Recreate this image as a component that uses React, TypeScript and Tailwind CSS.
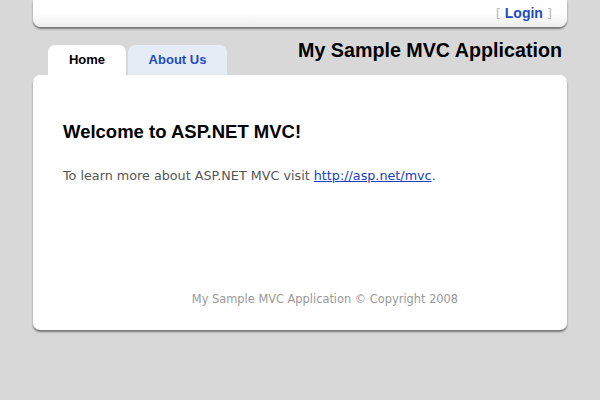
export default function App() {
  return (
    <div className="min-h-[400px] w-[600px] bg-[#d8d8d8] font-['DejaVu_Sans',sans-serif]">
      <div className="mx-[33px] w-[534px]">
        {/* login bar */}
        <div className="flex h-[27px] items-center justify-end rounded-b-[8px] bg-gradient-to-b from-white via-white to-[#ececec] pr-[15px] shadow-[0_2px_2px_rgba(0,0,0,0.45)]">
          <span className="text-[13px] text-[#bbb]">[</span>
          <a href="#" className="mx-[4px] font-['Liberation_Sans',sans-serif] text-[14px] font-bold text-[#1e4cbe]">Login</a>
          <span className="text-[13px] text-[#bbb]">]</span>
        </div>

        {/* header: tabs + title */}
        <div className="flex h-[48px] justify-between">
          <div className="ml-[15px] flex items-end gap-[2px] font-['Liberation_Sans',sans-serif]">
            <div className="flex h-[30px] w-[78px] items-center justify-center rounded-t-[7px] bg-white text-[13px] font-bold text-black">Home</div>
            <div className="flex h-[30px] w-[99px] items-center justify-center rounded-t-[7px] bg-[#e6ecf6] text-[13px] font-bold text-[#1e4cbe]">About Us</div>
          </div>
          <h1 className="mr-[5px] mt-[10px] font-['Liberation_Sans',sans-serif] text-[19.7px] font-bold leading-[26px] text-black">My Sample MVC Application</h1>
        </div>

        {/* main */}
        <div className="h-[255px] rounded-[7px] bg-white px-[30px] pt-[43px] shadow-[0_2px_2px_rgba(0,0,0,0.45)]">
          <h2 className="font-['Liberation_Sans',sans-serif] text-[18.5px] font-bold text-black">Welcome to ASP.NET MVC!</h2>
          <p className="mt-[20px] text-[12.75px] text-[#555]">
            To learn more about ASP.NET MVC visit{' '}
            <a href="#" className="text-[#1a3dc1] underline">http://asp.net/mvc</a>.
          </p>
          <div className="mt-[106px] pl-[50px] text-center text-[11.4px] text-[#999]">
            My Sample MVC Application © Copyright 2008
          </div>
        </div>
      </div>
    </div>
  );
}
